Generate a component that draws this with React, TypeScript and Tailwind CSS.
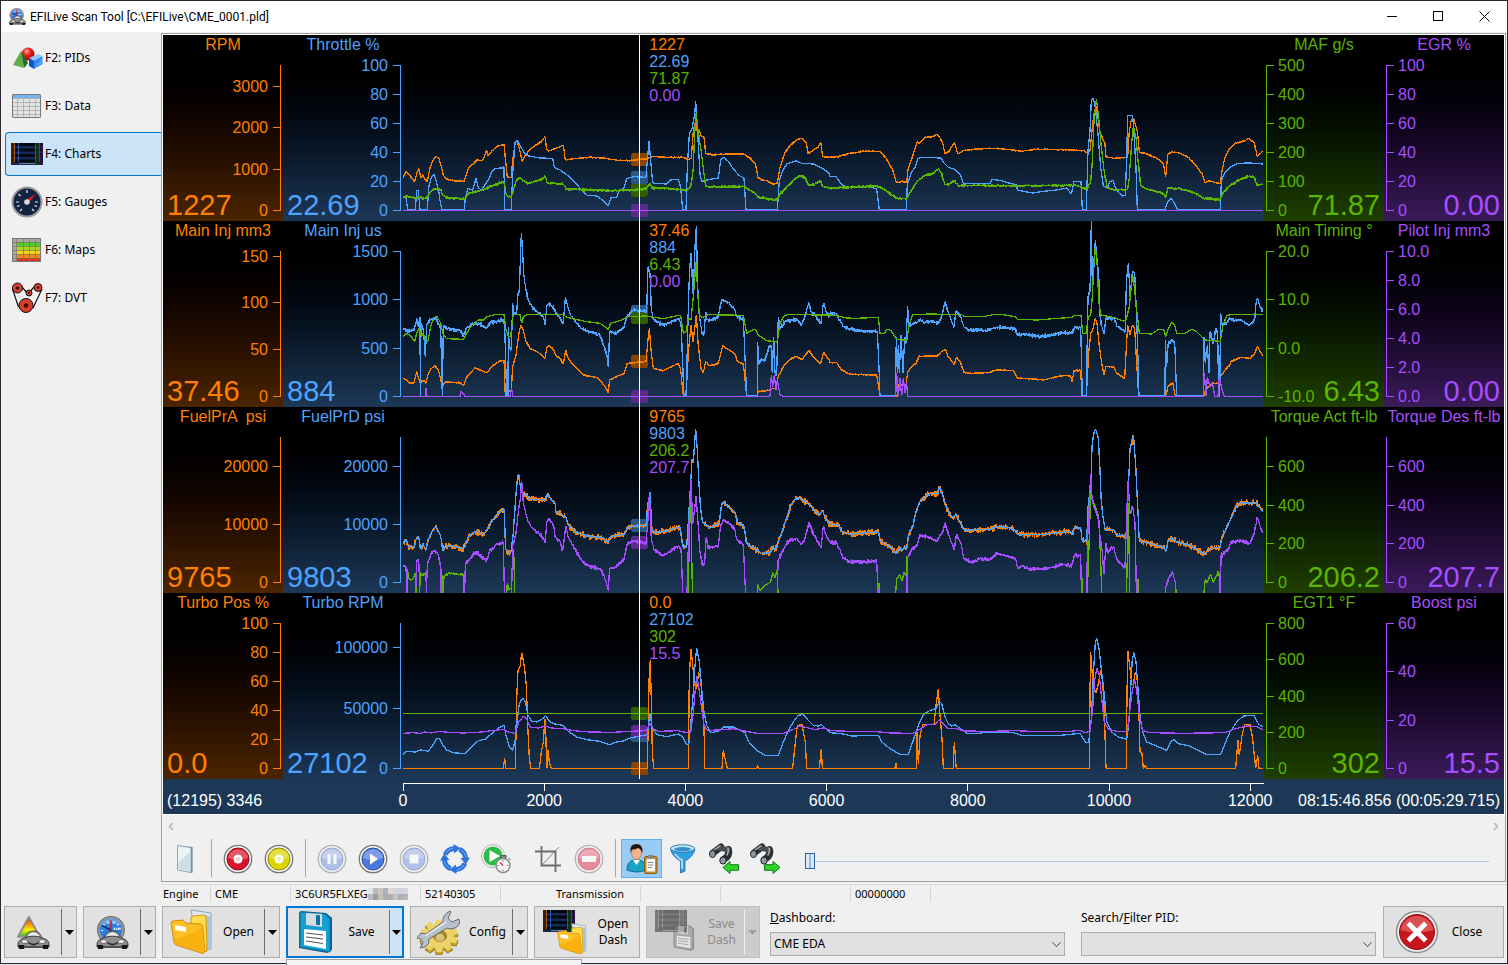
import type { ReactNode } from 'react'

const SAMPLES = 12195
const CURSOR = 3346

// Plot space: three units per pixel, 861 x 186 px
const PLOT_W = 2583
const PLOT_H = 558

const COLOR = {
  orange: '#ff8000',
  blue: '#4da3ff',
  green: '#5ab400',
  purple: '#a64dff',
}

const DIM = {
  orange: '#874400',
  blue: '#2b5785',
  green: '#2f5f00',
  purple: '#5a2a8c',
}

type Hue = keyof typeof COLOR

type Channel = {
  hue: Hue
  name: string
  value: string
  min: number
  max: number
  ticks: string[]
  marker: number
  jitter: number
  early: string
  late: string
}

const FUEL_EARLY =
  '9,412 18,400 24,420 42,425 48,400 56,392 62,430 68,412 78,432 82,410 95,380 106,362 118,380 124,400 128,435 135,422 150,418 190,428 200,408 205,392 228,375 248,386 262,370 278,342 295,322 312,308 317,430 325,440 334,436 340,380 346,290 351,230 356,205 361,240 368,265 378,265 390,280 430,280 436,285 442,262 452,280 465,290 468,320 482,325 497,332 504,356 530,378 560,390 608,395 625,410 632,392 672,385 682,366 700,360 738,358 743,300 750,258 755,370 765,380 800,375 840,362 848,420 860,425 866,330 872,230 876,160 880,170 887,68 892,130 896,220 902,310 908,350 930,365 958,352 964,300 970,288 985,302 1005,320 1012,350 1032,360 1040,412 1070,432 1085,442 1110,440 1118,425 1126,432 1140,395 1155,350 1172,300 1185,280 1197,276 1225,292 1245,318 1258,325 1268,315 1275,332 1288,355'
const FUEL_LATE =
  '0,355 25,357 36,378 60,384 145,378 150,405 180,422 198,442 210,425 215,435 225,422 230,430 235,390 250,355 258,318 270,285 300,262 325,262 327,242 335,258 345,290 358,325 368,335 378,325 390,350 402,372 480,370 500,362 535,364 555,372 565,386 640,385 720,376 726,385 733,366 752,366 757,405 770,405 775,290 783,240 786,120 790,90 796,70 804,90 808,150 814,290 820,340 826,372 850,370 860,388 888,390 893,290 900,130 910,88 916,160 922,280 928,405 960,412 1003,425 1007,438 1014,405 1025,395 1040,408 1080,418 1123,445 1145,425 1170,425 1175,395 1195,355 1220,300 1232,290 1262,292 1278,290 1285,300 1298,316'

const PANELS: Channel[][] = [
  [
    {
      hue: 'orange', name: 'RPM', value: '1227', min: 0, max: 3500, ticks: ['3000', '2000', '1000', '0'], marker: 376, jitter: 2,
      early: '9,430 18,412 30,425 44,444 50,418 57,404 62,432 68,422 76,438 82,442 90,402 98,380 108,367 116,372 124,398 130,424 138,435 160,440 193,442 200,418 208,398 222,388 230,378 248,380 256,360 260,348 263,366 275,352 290,337 303,334 312,330 316,372 322,430 334,430 338,380 345,330 350,318 356,336 361,355 366,382 372,370 385,352 405,335 425,322 435,308 440,345 446,352 470,342 490,334 496,378 520,374 570,370 610,372 660,380 690,380 740,374 760,367 810,370 850,370 866,377 874,372 880,290 886,266 890,290 898,290 904,306 912,310 917,358 930,362 1030,360 1050,372 1066,390 1074,430 1085,438 1100,440 1118,450 1132,447 1140,400 1155,355 1170,335 1190,318 1203,312 1218,325 1225,360 1240,348 1255,338 1262,324 1268,368 1288,370',
      late: '0,370 25,368 60,358 100,352 150,352 168,372 188,408 200,446 215,442 230,446 234,406 250,360 262,322 266,330 284,310 310,308 321,300 330,312 337,325 345,360 358,350 373,326 383,360 400,350 440,345 500,343 540,347 575,352 620,346 720,348 760,350 770,356 780,350 787,280 792,240 798,215 802,240 810,295 818,316 824,322 828,368 850,373 893,370 897,300 903,262 910,252 916,270 922,292 928,354 950,360 980,372 1000,388 1007,430 1013,362 1025,354 1050,358 1075,370 1100,396 1117,420 1124,446 1140,440 1155,446 1171,448 1176,410 1185,370 1196,348 1215,328 1240,322 1256,314 1272,325 1277,345 1282,368 1298,352',
    },
    {
      hue: 'blue', name: 'Throttle %', value: '22.69', min: 0, max: 100, ticks: ['100', '80', '60', '40', '20', '0'], marker: 430, jitter: 0,
      early: '9,490 18,492 23,528 46,528 50,470 55,470 58,505 60,528 82,528 86,460 94,430 102,422 108,440 116,470 120,500 126,528 193,528 196,490 204,464 218,468 228,434 235,462 245,468 256,450 265,438 275,415 285,403 310,402 312,398 314,528 318,528 334,528 338,420 345,325 352,320 360,335 372,355 386,366 420,372 458,373 463,400 480,408 500,422 520,440 545,468 562,484 590,486 610,500 625,515 632,492 650,490 656,472 672,462 680,434 700,428 738,430 742,380 747,322 752,380 758,446 765,448 800,450 812,438 835,436 842,460 848,528 858,528 862,400 868,300 876,285 884,240 887,202 892,280 900,420 905,442 930,436 955,432 962,378 970,370 985,382 1000,405 1018,425 1032,432 1038,528 1132,528 1138,440 1148,410 1160,390 1188,380 1205,388 1240,390 1262,400 1280,412 1288,420',
      late: '0,427 18,428 28,442 38,455 60,460 120,458 140,465 148,528 229,528 232,450 244,415 255,400 264,373 275,370 333,372 340,385 355,400 378,408 392,424 401,450 440,448 480,448 486,436 515,440 540,448 560,452 562,468 590,474 610,477 640,472 680,468 710,462 724,480 732,443 753,443 757,528 769,528 774,350 780,290 784,200 790,193 796,220 804,300 812,400 820,455 833,463 838,445 848,438 856,460 866,476 878,486 886,484 890,370 893,245 908,244 912,300 918,400 922,528 1005,528 1012,505 1024,492 1034,510 1044,528 1171,528 1174,440 1185,415 1200,400 1222,388 1260,387 1298,390',
    },
    {
      hue: 'green', name: 'MAF g/s', value: '71.87', min: 0, max: 500, ticks: ['500', '400', '300', '200', '100', '0'], marker: 468, jitter: 4,
      early: '9,490 20,486 44,492 60,490 72,495 82,488 95,470 108,464 122,466 130,486 150,493 195,494 206,478 230,472 250,468 265,460 285,452 310,444 314,455 320,485 334,490 340,470 350,436 358,432 370,440 385,448 400,444 420,438 436,428 442,448 490,450 498,465 540,467 640,470 700,468 740,464 750,448 757,462 800,464 860,468 872,460 880,400 884,300 888,238 893,280 902,340 912,420 917,458 960,458 1030,458 1060,474 1075,490 1110,496 1132,496 1140,480 1160,460 1180,438 1200,424 1215,430 1225,454 1245,450 1262,440 1268,458 1288,462',
      late: '0,462 60,460 140,456 165,468 200,493 230,494 240,475 262,442 285,424 310,418 325,404 333,415 345,452 360,450 373,440 385,456 440,454 560,456 740,454 770,464 782,445 787,380 792,260 799,196 805,240 814,340 822,410 832,462 860,468 893,466 898,430 904,340 910,275 918,310 924,380 932,455 950,465 1000,478 1007,492 1013,462 1050,464 1090,475 1125,494 1170,496 1180,475 1200,455 1230,436 1256,427 1272,430 1282,455 1298,450',
    },
    {
      hue: 'purple', name: 'EGR %', value: '0.00', min: 0, max: 100, ticks: ['100', '80', '60', '40', '20', '0'], marker: 529, jitter: 0,
      early: '9,529', late: '1298,529',
    },
  ],
  [
    {
      hue: 'orange', name: 'Main Inj mm3', value: '37.46', min: 0, max: 155, ticks: ['150', '100', '50', '0'], marker: 424, jitter: 2,
      early: '9,475 20,480 30,490 42,488 50,455 60,488 72,480 78,490 85,460 95,445 105,437 115,450 127,500 135,486 178,488 192,495 198,475 212,458 225,443 240,450 260,458 275,440 295,425 312,420 316,528 320,528 325,512 334,512 338,440 348,405 356,345 362,315 368,325 378,365 390,385 420,400 435,415 440,385 446,377 460,388 467,405 480,415 490,432 497,390 503,412 520,435 550,465 590,472 612,495 625,518 629,480 650,470 672,460 682,430 738,425 742,380 748,325 754,400 760,445 790,452 835,430 842,450 850,528 858,528 865,400 873,315 879,365 889,285 895,380 904,450 910,458 917,425 930,438 955,430 968,378 985,388 1005,402 1012,425 1030,432 1040,528 1072,528 1074,515 1100,512 1125,505 1135,470 1150,440 1170,418 1188,410 1207,418 1227,392 1238,408 1262,432 1270,398 1288,420',
      late: '0,427 20,428 35,450 60,463 140,465 146,500 150,528 203,528 205,495 228,495 233,455 244,440 258,430 267,410 290,408 322,408 335,395 346,388 355,410 373,435 379,412 390,425 403,458 430,460 475,458 500,450 550,452 562,474 600,476 640,480 700,466 722,468 726,485 732,452 752,452 756,528 769,528 776,400 782,340 788,330 796,295 801,310 808,380 815,430 822,465 828,440 850,440 860,460 884,475 888,400 893,315 900,345 907,315 914,325 920,430 926,528 1007,528 1014,500 1028,488 1036,528 1123,528 1126,510 1145,490 1165,490 1172,470 1185,450 1200,435 1203,425 1230,412 1260,415 1274,400 1282,380 1298,408',
    },
    {
      hue: 'blue', name: 'Main Inj us', value: '884', min: 0, max: 1500, ticks: ['1500', '1000', '500', '0'], marker: 274, jitter: 6,
      early: '9,325 30,335 44,325 50,295 55,320 60,290 61,528 63,310 70,330 76,410 80,315 90,300 105,295 115,310 122,325 127,528 130,320 150,328 180,330 190,345 200,325 215,310 240,312 260,325 270,308 310,300 314,320 320,528 324,528 325,320 328,385 334,385 338,250 342,280 350,280 354,220 358,210 362,100 364,40 368,100 371,160 378,210 386,245 400,265 430,290 435,315 440,260 446,250 462,265 475,290 490,310 496,232 503,262 515,290 530,310 545,325 560,332 600,345 612,380 620,400 625,440 629,335 650,340 672,320 680,290 700,270 740,275 744,140 750,160 754,270 760,300 790,315 815,305 835,295 843,310 852,528 858,528 864,300 868,165 873,100 880,230 884,100 889,18 893,200 898,290 907,345 912,340 917,275 922,300 940,300 955,290 965,238 985,248 1003,265 1010,290 1030,300 1040,528 1072,528 1073,365 1076,435 1082,420 1095,420 1108,380 1113,375 1117,460 1121,350 1125,460 1130,460 1135,290 1140,325 1155,305 1190,298 1205,315 1220,270 1227,248 1233,275 1245,285 1263,312 1270,250 1280,280 1288,288',
      late: '0,282 18,280 28,300 40,320 60,328 110,334 142,334 146,420 150,528 196,528 199,350 202,460 205,375 208,460 213,345 219,460 224,350 228,370 233,258 236,315 260,310 266,298 285,308 300,303 325,310 335,290 345,245 352,270 372,322 378,272 392,290 403,322 420,330 470,332 500,322 555,325 562,345 580,342 635,350 700,338 725,340 735,322 752,322 757,528 769,528 774,230 780,215 784,0 787,200 793,120 796,60 800,110 806,160 810,290 815,320 822,340 828,295 850,295 862,320 886,335 889,190 895,130 900,230 907,155 914,160 918,250 922,350 927,528 1005,528 1006,360 1010,440 1014,375 1025,360 1034,365 1040,528 1120,528 1122,350 1126,430 1132,375 1137,460 1140,335 1150,370 1158,325 1163,340 1166,528 1169,528 1172,280 1176,315 1190,310 1200,295 1215,302 1232,300 1258,315 1274,300 1278,250 1282,235 1290,260 1298,275',
    },
    {
      hue: 'green', name: 'Main Timing °', value: '6.43', min: -10, max: 20, ticks: ['20.0', '10.0', '0.0', '-10.0'], marker: 292, jitter: 0,
      early: '9,350 20,340 32,348 44,364 50,340 58,325 64,350 70,340 78,365 84,362 92,320 102,292 112,290 122,310 130,345 140,356 190,358 200,340 215,315 235,300 250,300 262,290 285,284 312,284 318,330 326,350 332,350 337,300 340,284 360,284 365,310 370,290 380,284 490,284 500,292 560,305 600,310 625,328 632,310 660,302 685,290 740,288 750,290 790,296 835,286 842,288 850,340 858,335 865,295 873,300 880,230 888,125 894,230 898,285 907,292 925,284 1030,286 1040,340 1060,328 1068,330 1075,345 1100,362 1132,366 1140,310 1150,290 1160,284 1288,285',
      late: '0,285 25,288 50,294 80,295 145,292 150,340 162,340 172,328 183,332 200,358 220,360 231,360 236,320 248,284 300,282 395,284 402,290 460,290 490,284 520,284 555,290 562,298 620,300 685,295 725,292 735,286 753,286 758,340 768,340 775,290 782,285 787,230 792,120 796,80 802,140 806,240 812,285 850,292 880,303 888,300 898,260 904,200 908,165 914,210 920,270 928,340 965,342 985,328 1002,330 1007,350 1015,325 1025,308 1034,315 1040,340 1065,340 1085,328 1100,335 1115,350 1125,360 1171,364 1178,320 1190,286 1210,283 1298,284',
    },
    {
      hue: 'purple', name: 'Pilot Inj mm3', value: '0.00', min: 0, max: 10, ticks: ['10.0', '8.0', '6.0', '4.0', '2.0', '0.0'], marker: 529, jitter: 0,
      early: '9,529 76,529 78,505 81,529 180,529 182,515 190,520 194,529 330,529 335,505 338,529 1110,529 1114,465 1118,500 1123,465 1128,510 1132,480 1140,525 1150,529 1288,529',
      late: '0,529 197,529 200,460 205,529 210,475 215,529 220,475 225,520 230,490 233,529 1120,529 1123,458 1128,529 1132,470 1140,500 1148,490 1154,529 1164,529 1168,470 1175,505 1183,529 1298,529',
    },
  ],
  [
    {
      hue: 'orange', name: 'FuelPrA  psi', value: '9765', min: 0, max: 25000, ticks: ['20000', '10000', '0'], marker: 358, jitter: 9,
      early: FUEL_EARLY, late: FUEL_LATE,
    },
    {
      hue: 'blue', name: 'FuelPrD psi', value: '9803', min: 0, max: 25000, ticks: ['20000', '10000', '0'], marker: 358, jitter: 1,
      early: FUEL_EARLY, late: FUEL_LATE,
    },
    {
      hue: 'green', name: 'Torque Act ft-lb', value: '206.2', min: 0, max: 750, ticks: ['600', '400', '200', '0'], marker: 409, jitter: 3,
      early: '9,600 20,600 22,490 28,522 40,518 46,500 50,600 59,600 60,500 66,510 78,500 80,600 123,600 125,490 128,575 132,510 145,502 190,506 194,600 318,600 322,530 326,552 334,545 338,480 341,430 345,600 864,600 868,400 872,270 878,600 1071,600 1073,535 1080,555 1095,538 1112,528 1118,500 1126,515 1132,490 1135,600 1288,600',
      late: '0,600 145,600 147,530 150,600 195,600 198,545 200,520 208,505 216,525 222,500 228,510 231,450 234,600 755,600 757,515 759,600 770,600 776,450 782,260 806,330 812,460 816,600 889,600 895,290 900,600 922,600 924,520 927,600 1035,600 1038,550 1041,600 1119,600 1123,545 1126,520 1132,530 1142,505 1150,530 1158,512 1166,495 1169,525 1172,600 1298,600',
    },
    {
      hue: 'purple', name: 'Torque Des ft-lb', value: '207.7', min: 0, max: 750, ticks: ['600', '400', '200', '0'], marker: 409, jitter: 6,
      early: '9,480 18,482 22,600 46,600 50,465 56,460 61,600 78,600 82,475 94,440 104,433 114,445 122,480 124,600 193,600 196,475 210,458 228,436 240,450 260,465 268,436 290,415 310,408 314,600 334,600 338,420 348,380 356,310 362,270 365,225 370,290 380,335 395,365 420,385 432,400 436,410 440,350 445,338 460,355 466,395 480,405 488,435 497,360 505,395 525,430 550,470 570,482 600,488 610,505 620,535 625,555 629,488 645,485 672,460 682,412 700,405 738,412 744,340 748,262 754,400 762,430 785,448 805,440 835,420 843,430 850,600 860,600 866,380 873,222 878,355 888,270 894,350 900,440 908,480 914,470 918,395 925,425 955,420 962,360 970,340 990,355 1003,365 1010,400 1030,415 1038,600 1132,600 1134,465 1145,440 1165,405 1190,398 1205,415 1215,395 1227,350 1240,385 1263,425 1270,362 1280,395 1288,405',
      late: '0,408 20,410 28,428 38,455 60,468 140,466 146,600 229,600 233,455 246,430 262,418 268,390 290,392 322,405 328,390 338,380 345,350 355,385 373,432 380,385 392,410 403,460 430,470 450,458 480,462 500,442 530,450 556,458 563,488 575,478 600,490 650,488 700,475 725,480 733,448 752,448 755,600 768,600 774,370 782,205 787,290 795,310 803,325 810,390 816,430 822,505 828,410 832,440 850,422 860,460 885,485 890,330 894,225 900,325 907,300 915,350 920,600 1005,600 1007,545 1018,510 1028,500 1036,530 1038,600 1171,600 1173,450 1185,438 1198,425 1202,408 1230,405 1260,412 1272,385 1282,335 1290,360 1298,382',
    },
  ],
  [
    {
      hue: 'orange', name: 'Turbo Pos %', value: '0.0', min: 0, max: 100, ticks: ['100', '80', '60', '40', '20', '0'], marker: 529, jitter: 0,
      early: '9,529 310,529 314,498 317,529 346,529 350,320 354,235 360,225 365,182 370,205 375,240 379,280 383,400 388,500 393,529 418,529 424,480 430,450 434,390 436,380 439,480 441,529 444,475 448,510 454,529 742,529 745,380 748,235 751,205 754,330 757,480 761,529 865,529 868,250 873,170 878,220 884,280 890,290 896,240 902,260 908,350 912,400 914,529 966,529 970,475 975,500 982,529 1070,529 1073,520 1076,529 1178,529 1186,450 1192,400 1206,398 1212,430 1216,450 1220,529 1258,529 1264,470 1267,529 1288,529',
      late: '0,529 195,529 197,512 201,529 259,529 261,420 265,515 270,430 278,398 312,398 318,340 325,292 330,370 336,440 340,529 370,529 373,450 377,510 379,529 778,529 780,300 782,180 787,250 792,290 798,302 804,280 812,235 818,270 823,360 828,529 889,529 891,300 894,178 900,230 905,275 910,280 915,245 920,240 926,330 930,480 936,485 940,529 946,520 950,529 1217,529 1224,445 1228,490 1236,430 1244,398 1260,398 1268,440 1272,480 1277,529 1283,490 1287,529 1298,529',
    },
    {
      hue: 'blue', name: 'Turbo RPM', value: '27102', min: 0, max: 120000, ticks: ['100000', '50000', '0'], marker: 430, jitter: 0,
      early: '9,488 20,478 45,480 62,474 85,478 98,460 110,440 118,440 128,458 140,474 160,482 195,485 215,465 235,446 255,442 275,425 295,408 312,400 318,430 328,465 337,475 345,450 352,380 358,335 368,318 376,330 384,370 395,388 410,390 428,380 437,370 445,385 460,395 490,400 505,418 530,435 560,443 600,448 628,458 650,450 670,447 690,438 720,432 742,428 750,362 756,405 770,428 800,434 835,426 848,435 858,455 866,458 872,400 880,300 884,230 890,168 898,210 905,290 912,360 920,400 932,422 955,418 970,405 1000,405 1035,422 1045,448 1070,475 1095,490 1135,490 1148,455 1165,415 1180,390 1195,370 1210,367 1225,385 1240,400 1255,402 1265,398 1275,408 1288,418',
      late: '0,422 35,425 65,432 145,430 155,450 180,470 210,487 235,487 248,450 265,400 280,368 300,355 318,350 328,328 335,335 345,375 355,395 365,402 375,398 390,410 412,424 445,424 475,420 550,422 575,430 690,430 750,424 760,440 768,452 776,450 784,380 790,250 796,150 801,140 807,170 815,240 823,310 830,390 845,420 865,435 890,442 896,400 902,290 907,200 912,182 918,210 924,290 930,370 938,420 950,450 975,460 1010,475 1022,450 1032,442 1045,455 1080,462 1110,478 1130,487 1172,487 1185,455 1200,420 1220,390 1240,372 1272,370 1285,395 1298,405',
    },
    {
      hue: 'green', name: 'EGT1 °F', value: '302', min: 0, max: 800, ticks: ['800', '600', '400', '200', '0'], marker: 364, jitter: 0,
      early: '9,364', late: '1298,364',
    },
    {
      hue: 'purple', name: 'Boost psi', value: '15.5', min: 0, max: 60, ticks: ['60', '40', '20', '0'], marker: 419, jitter: 0,
      early: '9,424 40,422 60,424 75,420 95,423 120,418 145,421 190,423 245,420 275,416 310,412 325,420 345,424 356,390 370,373 380,380 390,405 415,408 437,402 455,408 490,410 520,416 570,420 640,421 690,418 740,416 750,395 756,408 775,418 835,416 850,420 872,422 880,360 886,290 890,252 897,290 905,350 912,400 922,415 960,414 1000,410 1040,418 1070,424 1150,424 1180,412 1200,402 1225,408 1245,413 1270,408 1288,414',
      late: '0,416 60,418 140,419 180,423 250,424 280,405 290,398 315,397 328,383 340,395 355,410 380,410 400,417 480,418 560,416 600,418 720,418 750,415 765,422 780,418 788,350 794,265 801,228 808,250 815,320 823,390 835,412 860,418 892,418 900,350 907,295 914,265 920,295 928,370 938,415 960,422 1060,424 1185,422 1210,412 1250,402 1280,404 1298,412',
    },
  ],
]

// The log is stored in two blocks, each with its own origin
function parse(block: string, dx: number) {
  return block.split(' ').map((pair) => {
    const [x, y] = pair.split(',').map(Number)
    return [x + dx, y - 3]
  })
}

// Noisy channels sweep a short vertical band at every pixel column
function tracePoints(ch: Channel) {
  const pts = [...parse(ch.early, -9), ...parse(ch.late, 1281)]
  let seed = 17 + ch.jitter * 31
  const noise = () => {
    seed = (seed * 1103515245 + 12345) % 2147483648
    const r = seed / 2147483648
    return (0.25 + r * r) * ch.jitter
  }
  const out: string[] = []
  pts.forEach(([x, y], i) => {
    out.push(`${x},${y}`)
    const next = pts[i + 1]
    if (!next || ch.jitter === 0 || (y > 520 && next[1] > 520)) return
    for (let px = x + 3; px < next[0]; px += 3) {
      const t = (px - x) / (next[0] - x)
      const mid = y + (next[1] - y) * t
      out.push(`${px},${(mid - noise()).toFixed(1)}`, `${px},${(mid + noise()).toFixed(1)}`)
    }
  })
  return out.join(' ')
}

function Scale({ ch, side }: { ch: Channel; side: 'left' | 'right' }) {
  const left = side === 'left'
  const axis = left ? 117.5 : 2.5
  const tickEnd = left ? 110 : 10
  const color = COLOR[ch.hue]
  const yOf = (v: number) => Math.floor(175.5 - (145 * (v - ch.min)) / (ch.max - ch.min)) + 0.5
  return (
    <svg width="120" height="186" className="block" fill={color} fontSize="16">
      <text x="60" y="15" textAnchor="middle" className="whitespace-pre">{ch.name}</text>
      <path
        d={`M${axis} 30V176` + ch.ticks.map((t) => `M${axis} ${yOf(Number(t))}H${tickEnd}`).join('')}
        stroke={color}
        shapeRendering="crispEdges"
      />
      {ch.ticks.map((t) => (
        <text key={t} x={left ? 105 : 14} y={yOf(Number(t)) + 5.5} textAnchor={left ? 'end' : 'start'}>{t}</text>
      ))}
      <text x={left ? 4 : 116} y="180" fontSize="29" textAnchor={left ? 'start' : 'end'}>{ch.value}</text>
    </svg>
  )
}

function Panel({ channels }: { channels: Channel[] }) {
  const [orange, blue, green, purple] = channels
  return (
    <section className="grid grid-cols-[120px_minmax(0,1fr)_120px_120px]">
      <div className="bg-linear-to-b from-black from-5% to-[#4c2500]">
        <Scale ch={orange} side="left" />
      </div>
      <div className="grid grid-cols-[120px_minmax(0,1fr)] bg-linear-to-b from-black from-5% to-[#1d3857]">
        <Scale ch={blue} side="left" />
        <div className="relative">
          <svg
            viewBox={`0 0 ${PLOT_W} ${PLOT_H}`}
            preserveAspectRatio="none"
            className="block h-[186px] w-full"
            shapeRendering="crispEdges"
          >
            {channels.map((ch) => (
              <rect key={ch.name} x={(PLOT_W * CURSOR) / SAMPLES - 25} y={ch.marker - 22} width="51" height="39" rx="7" fill={DIM[ch.hue]} />
            ))}
            {channels.map((ch) => (
              <polyline
                key={ch.name}
                points={tracePoints(ch)}
                fill="none"
                stroke={COLOR[ch.hue]}
                strokeWidth="1.3"
                strokeLinejoin="bevel"
                vectorEffect="non-scaling-stroke"
              />
            ))}
          </svg>
          {/* Cursor and its readout */}
          <div
            className="absolute inset-y-0 border-l border-white pt-px pl-[9px] text-base leading-[17px]"
            style={{ left: `${(CURSOR / SAMPLES) * 100}%` }}
          >
            <p className="text-[#ff8000]">{orange.value}</p>
            <p className="text-[#4da3ff]">{blue.value}</p>
            <p className="text-[#5ab400]">{green.value}</p>
            <p className="text-[#a64dff]">{purple.value}</p>
          </div>
        </div>
      </div>
      <div className="bg-linear-to-b from-black from-5% to-[#1f3f00]">
        <Scale ch={green} side="right" />
      </div>
      <div className="bg-linear-to-b from-black from-5% to-[#3b1b5a]">
        <Scale ch={purple} side="right" />
      </div>
    </section>
  )
}

function TimeAxis() {
  const marks = [0, 2000, 4000, 6000, 8000, 10000, 12000]
  return (
    <div className="grid h-[35px] grid-cols-[240px_minmax(0,1fr)_240px] bg-[#1d3857] text-base text-white">
      <p className="pt-2.5 pl-1 leading-6">(12195) 3346</p>
      <svg width="100%" height="35" className="overflow-visible" fontSize="16" fill="#fff">
        <line x1="0" x2="100%" y1="4.5" y2="4.5" stroke="#fff" shapeRendering="crispEdges" />
        {marks.map((m) => {
          const x = `${(m / SAMPLES) * 100}%`
          return (
            <g key={m}>
              <line x1={x} x2={x} y1="4" y2="12" stroke="#fff" shapeRendering="crispEdges" />
              <text x={x} y="27" textAnchor="middle">{m}</text>
            </g>
          )
        })}
      </svg>
      <p className="pt-2.5 pr-1 text-right leading-6 whitespace-nowrap">08:15:46.856 (00:05:29.715)</p>
    </div>
  )
}

/* ---------- Icons ---------- */

function Car() {
  return (
    <g>
      <path d="M8 22q1-7 8-7.500 7 .5 8 7.500z" fill="#a6a6a6" stroke="#333" strokeWidth=".8" />
      <path d="M10.500 19.500q2-3.500 5.500-3.500t5.500 3.500z" fill="#ececec" />
      <path d="M1 27q0-4 7-6 8-3 16 0 7 2 7 6v3H1z" fill="#8e8e8e" stroke="#2a2a2a" strokeWidth=".8" />
      <path d="M4 23.500l5-.5 2 3-5 .5zM28 23.500l-5-.5-2 3 5 .5z" fill="#fff" stroke="#333" strokeWidth=".5" />
      <path d="M11 25q5 4 10 0v1.500q-5 4-10 0z" fill="#222" />
      <path d="M1 28h6v4H2zM25 28h6l-1 4h-5z" fill="#161616" />
      <path d="M7 29.500h18V31H7z" fill="#4a4a4a" />
    </g>
  )
}

function ScanIcon({ size }: { size: number }) {
  return (
    <svg width={size} height={size} viewBox="0 0 32 32">
      <circle cx="14.500" cy="13.500" r="13" fill="#9b9b9b" stroke="#6b6b6b" />
      <circle cx="14.500" cy="13.500" r="10.800" fill="#2f7de0" />
      <path d="M5 9a10.500 10.500 0 0 1 19 0q-9-3-19 0z" fill="#7fb6f5" opacity=".7" />
      <path d="M5 14h2M7 8l1.500 1M11 5l1 2M18 5l-1 2M22 8l-1.500 1M24 12h-2" stroke="#fff" />
      <path d="M14.500 14V4" stroke="#e01010" strokeWidth="1.400" />
      <path d="M14.500 14L6 9" stroke="#082a60" strokeWidth="1.400" />
      <path d="M17 12.500h7" stroke="#dce9fb" strokeWidth="2" strokeDasharray="1.500 .7" />
      <Car />
    </svg>
  )
}

function TuneIcon() {
  return (
    <svg width="33" height="33" viewBox="0 0 32 32">
      <defs>
        <linearGradient id="heat" x1="0" x2="0" y1="0" y2="1">
          <stop offset="0" stopColor="#e01010" />
          <stop offset=".35" stopColor="#ff8a00" />
          <stop offset=".65" stopColor="#f6f000" />
          <stop offset="1" stopColor="#2fc020" />
        </linearGradient>
      </defs>
      <path d="M11.500 1L22 20H1z" fill="url(#heat)" stroke="#8c8c8c" strokeWidth="2" strokeLinejoin="round" />
      <Car />
    </svg>
  )
}

function PidsIcon() {
  return (
    <svg width="32" height="24" viewBox="0 0 32 24">
      <defs>
        <radialGradient id="ball" cx=".4" cy=".3" r=".7">
          <stop offset="0" stopColor="#ffb0a0" />
          <stop offset=".4" stopColor="#ee2222" />
          <stop offset="1" stopColor="#a30000" />
        </radialGradient>
      </defs>
      <circle cx="17" cy="8" r="6.500" fill="url(#ball)" />
      <path d="M10 5L2 19l11 3z" fill="#5fae4a" />
      <path d="M10 5l3 17 4-5z" fill="#1b6e26" />
      <path d="M18 12l5 2.500V23l-5-3z" fill="#1557c4" />
      <path d="M23 14.500l8.500-4.500v8L23 23z" fill="#2f8bf2" />
      <path d="M18 12l9-4 4.500 2-8.500 4.500z" fill="#8cc4ff" />
      <path d="M24 21.500l7-9v4.500z" fill="#67b3ff" opacity=".7" />
    </svg>
  )
}

function DataIcon() {
  return (
    <svg width="32" height="25" viewBox="-1 0 32 25">
      <rect x=".5" y=".5" width="28" height="23" rx="1" fill="#e4e4e4" stroke="#777" />
      <rect x="1" y="1" width="27" height="3" fill="#6fb2ee" />
      <path d="M1 4.500h27M1 8.500h27M1 12.500h27M1 16.500h27M1 20.500h27M5.500 1v22M11.500 1v22M17.500 1v22M23.500 1v22" stroke="#b4b4b4" />
      <rect x=".5" y=".5" width="28" height="23" rx="1" fill="none" stroke="#777" />
    </svg>
  )
}

function MiniChart({ gray }: { gray?: boolean }) {
  const rows = [0, 5.5, 11, 16.5]
  return (
    <g filter={gray ? 'grayscale(1)' : undefined} opacity={gray ? 0.5 : 1}>
      <rect width="32" height="22" fill="#14295a" />
      {rows.map((y) => (
        <rect key={y} y={y} width="32" height="3" fill="#04060e" />
      ))}
      <rect width="3" height="22" fill="#3c2412" opacity=".8" />
      <rect x="24.500" width="3.500" height="22" fill="#0e3a12" opacity=".8" />
      <rect x="28.500" width="3.500" height="22" fill="#321048" opacity=".8" />
      <path d="M3.500 0v19" stroke="#d06a10" strokeWidth=".8" />
      <path d="M7.500 0v19" stroke="#3570d0" strokeWidth=".8" />
      <path d="M24.500 0v19" stroke="#1d8a1d" strokeWidth=".8" />
      <path d="M28.500 0v19" stroke="#9a20c8" strokeWidth=".8" />
      <path d="M8 20.500h16" stroke="#9fb4d8" strokeWidth=".6" />
    </g>
  )
}

function ChartsIcon() {
  return (
    <svg width="32" height="22" viewBox="0 0 32 22">
      <MiniChart />
    </svg>
  )
}

function GaugeIcon() {
  return (
    <svg width="32" height="32" viewBox="0 0 32 32">
      <circle cx="16" cy="16" r="14.500" fill="#12233f" stroke="#9a9a9a" strokeWidth="2" />
      <path
        d="M5 16h3M24 16h3M16 4v3M7.500 8l2 2M6 20.500l2.500-1M26 20.500l-2.500-1M9 25l2-2M23 25l-2-2"
        stroke="#e8eef8"
        strokeWidth="1.200"
      />
      <path d="M15 14.500L25.500 7 17.500 17z" fill="#f01818" />
      <circle cx="16" cy="16" r="2.800" fill="#d8d8d8" />
    </svg>
  )
}

function MapsIcon() {
  return (
    <svg width="32" height="25" viewBox="-1 0 32 25">
      <rect x=".5" y=".5" width="28" height="23" fill="#a8a8a8" stroke="#777" />
      <rect x="5" y="4" width="23" height="4" fill="#4bd02a" />
      <rect x="5" y="8" width="23" height="4" fill="#a9d822" />
      <rect x="5" y="12" width="23" height="4" fill="#f2d61e" />
      <rect x="5" y="16" width="23" height="4" fill="#ee8722" />
      <rect x="5" y="20" width="23" height="3" fill="#dd2f22" />
      <path d="M1 4.500h27M1 8.500h27M1 12.500h27M1 16.500h27M1 20.500h27M4.500 1v22M11.500 1v22M17.500 1v22M23.500 1v22" stroke="#7d7550" strokeWidth=".7" />
    </svg>
  )
}

function DvtIcon() {
  return (
    <svg width="32" height="32" viewBox="0 0 32 32">
      <path d="M1.500 7l6 18M10 4l7 8 6-7M31 7l-9 19" stroke="#111" strokeWidth="1.200" fill="none" />
      <g fill="#d5402c" stroke="#111">
        <circle cx="6.500" cy="6" r="5" />
        <circle cx="27" cy="5.500" r="4" />
        <circle cx="18" cy="11" r="3" />
        <circle cx="15" cy="23.500" r="7" />
      </g>
      <g fill="#5d100a" stroke="#2b0805">
        <circle cx="6.500" cy="6" r="1.200" />
        <circle cx="27" cy="5.500" r=".8" />
        <circle cx="18" cy="11" r=".6" />
        <circle cx="15" cy="23.500" r="1.800" />
      </g>
    </svg>
  )
}

function RoundIcon({ color, shade, faded, children }: { color: string; shade: string; faded?: boolean; children: ReactNode }) {
  return (
    <svg width="30" height="30" viewBox="0 0 30 30" opacity={faded ? 0.5 : 1}>
      <circle cx="15" cy="15" r="13.700" fill="#f6f6f6" stroke="#777" strokeWidth="1.300" />
      <circle cx="15" cy="15" r="11" fill={color} stroke={shade} />
      <path d="M4.800 14a10.300 10.300 0 0 1 20.400 0q-10 3-20.400 0z" fill="#fff" opacity=".28" />
      {children}
    </svg>
  )
}

function DoorIcon() {
  return (
    <svg width="20" height="30" viewBox="0 0 20 30">
      <path d="M2.500 1.500L17.500 3v25.500l-2 .5z" fill="#5d7f93" />
      <path d="M2.500 1.500L16 3.500v25L2.500 26z" fill="#eaf2f6" stroke="#8fa7b3" />
      <path d="M3.500 18L15 8v19L3.500 25z" fill="#ccdee8" />
    </svg>
  )
}

function RefreshIcon() {
  return (
    <svg width="30" height="30" viewBox="0 0 30 30">
      {[0, 90, 180, 270].map((a) => (
        <g key={a} transform={`rotate(${a} 15 15)`}>
          <path d="M5.200 10.500A10.700 10.700 0 0 1 14 4.400" fill="none" stroke="#2f74dc" strokeWidth="5" />
          <path d="M13.500 0L20.500 4.300 14 9.500z" fill="#2f74dc" />
          <path d="M6 9A10.700 10.700 0 0 1 13 4" fill="none" stroke="#7aaef2" />
        </g>
      ))}
    </svg>
  )
}

function TimedPlayIcon() {
  return (
    <svg width="32" height="32" viewBox="0 0 32 32">
      <circle cx="13" cy="13" r="11.500" fill="#f2f2f2" stroke="#b5b5b5" />
      <circle cx="13" cy="13" r="9.500" fill="#2bbd44" />
      <path d="M9.500 7v12L20 13z" fill="#fff" />
      <path d="M21 12.500h5v3h-5zM28.500 15l2 2" fill="#888" stroke="#555" />
      <circle cx="23" cy="22.500" r="7" fill="#f8f8f8" stroke="#8a8a8a" strokeWidth="1.500" />
      <path d="M23 22.500l-3-3" stroke="#d22" strokeWidth="1.300" />
      <path d="M23 17v1.500M23 26.500V28M17.500 22.500H19M27 22.500h1.500" stroke="#777" />
    </svg>
  )
}

function CropIcon() {
  return (
    <svg width="28" height="28" viewBox="0 0 28 28" fill="none" stroke="#6c6c6c" strokeWidth="1.800">
      <path d="M7.500 1v19.500H27M1 6.500h20.500V27" />
      <path d="M8 20L25 2" strokeWidth=".8" />
    </svg>
  )
}

function PersonIcon() {
  return (
    <svg width="34" height="34" viewBox="0 0 34 34">
      <path d="M2 28q0-9 7-10h5q7 1 7 10-9 4-19 0z" fill="#1ba3c6" stroke="#0b6c88" />
      <path d="M8 18l3.500 5L15 18z" fill="#fff" />
      <ellipse cx="11.500" cy="11" rx="5" ry="6.500" fill="#f0b488" stroke="#a86b3c" strokeWidth=".6" />
      <path d="M5.500 11Q4 2.500 11 2q7.500 0 6.500 9-2-4.500-4.500-5-4 2-6 1.500-.8 1-1.500 3.500z" fill="#241712" />
      <rect x="19.500" y="14.500" width="12.500" height="17" rx="1.500" fill="#c78b2a" stroke="#8a5b12" />
      <path d="M21.500 17H30v12.500h-8.500z" fill="#fafafa" />
      <path d="M23 13h5.500v3.500H23z" fill="#888" />
      <path d="M23 20.500h5.500M23 23h5.500M23 25.500h4" stroke="#8a8a8a" />
    </svg>
  )
}

function FunnelIcon() {
  return (
    <svg width="30" height="32" viewBox="0 0 30 32">
      <path d="M2.500 6q2 8 10 12v12l4.500-2V18q8-4 10-12z" fill="#2f9fe0" stroke="#1668a8" strokeWidth=".8" />
      <path d="M7 11q4 5 7 6v9" stroke="#a8dcff" strokeWidth="2" fill="none" />
      <ellipse cx="14.500" cy="5.500" rx="12" ry="3.800" fill="#bfe4fb" stroke="#1668a8" strokeWidth=".8" />
      <ellipse cx="14.500" cy="6.200" rx="8.500" ry="2.200" fill="#3a8fc8" />
    </svg>
  )
}

function BinocularsIcon({ dir }: { dir: 'back' | 'next' }) {
  return (
    <svg width="32" height="32" viewBox="0 0 32 32">
      <g fill="none" strokeLinecap="round">
        <path d="M5.500 9.500L13 4" stroke="#2b2f32" strokeWidth="7" />
        <path d="M15.500 16.500Q22 13 20.500 6.500" stroke="#2b2f32" strokeWidth="7" />
        <path d="M11 5l9 2" stroke="#484e52" strokeWidth="5" />
        <path d="M6 7l6-4M19 12q2-3 1-7" stroke="#a9b1b6" strokeWidth="1.500" />
      </g>
      <ellipse cx="4.500" cy="11" rx="3" ry="3.600" fill="#8d989f" stroke="#1c1f21" />
      <ellipse cx="15" cy="17.500" rx="3.200" ry="3.600" fill="#8d989f" stroke="#1c1f21" />
      {dir === 'back' ? (
        <path d="M15 24.500l7-6v3.200h8.500v5.600H22v3.200z" fill="#2bd52b" stroke="#107a10" />
      ) : (
        <path d="M31 24.500l-7-6v3.200h-8.500v5.600H24v3.200z" fill="#2bd52b" stroke="#107a10" />
      )}
    </svg>
  )
}

function Folder() {
  return (
    <g>
      <path d="M21 1l20 3v36l-12 2z" fill="#dcebf5" stroke="#8da3b5" />
      <path d="M35 6l6 2v30l-5 3z" fill="#a9c4d6" />
      <path d="M21 14V9q0-2 2-2l11-1q2 0 2 2l1 34-6 2z" fill="#ffdb4d" stroke="#d69a10" />
      <path d="M1 14q0-2 2-2l10-1 3 3 14 1q2 0 2.500 2L35 43q-2 2-4 1L6 36q-2-1-2-3z" fill="#fdbf26" stroke="#d1900c" />
      <path d="M4 30q14-2 28-12l2 24q-1 1-3 1L6 35q-1-1-2-5z" fill="#f5a800" opacity=".6" />
      <path d="M5 16l11 2v5L5 21z" fill="#fff" />
    </g>
  )
}

function Floppy({ gray }: { gray?: boolean }) {
  return (
    <g filter={gray ? 'grayscale(1)' : undefined} opacity={gray ? 0.5 : 1}>
      <path d="M3 1l25 2 6 5v32l-5 3L1 38V3z" fill="#0c5f92" />
      <path d="M2 2l25 2 5 5v33L2 37z" fill="#16a0d2" stroke="#0a6fa0" />
      <path d="M8 3l16 1v13L8 15z" fill="#d3dde2" />
      <path d="M18 5l4 .3v10l-4-.6z" fill="#13709c" />
      <path d="M6 19l22 2v18L6 35z" fill="#fff" />
      <path d="M8 23l17 2M8 27l17 2M8 31l17 2.500" stroke="#555" strokeWidth="1.200" />
    </g>
  )
}

const TEETH = [0, 36, 72, 108, 144, 180, 216, 252, 288, 324]

function ConfigIcon() {
  return (
    <svg width="48" height="46" viewBox="0 0 48 46">
      <g transform="translate(0 4) scale(1 .85)" stroke="#9a7a1c">
        {TEETH.map((a) => (
          <path key={a} d="M19.500 17l1.500-9h6l1.500 9z" fill="#c9a52f" transform={`translate(0 3) rotate(${a} 24 27)`} />
        ))}
        <circle cx="24" cy="30" r="14" fill="#c9a52f" />
        {TEETH.map((a) => (
          <path key={a} d="M19.500 17l1.500-9h6l1.500 9z" fill="#ecd268" stroke="none" transform={`rotate(${a} 24 27)`} />
        ))}
        <circle cx="24" cy="27" r="13.500" fill="#ecd268" stroke="none" />
        <circle cx="25" cy="27" r="6.500" fill="#a98422" />
        <circle cx="25" cy="29" r="4.500" fill="#d8c27c" stroke="none" />
      </g>
      <path
        d="M2 29l4-5 5 1 17-12q-1-7 7-11l1 1-3 6 4 4 7-3q2 6-4 9-4 2-8 0L14 30q1 5-4 8l-5 1 3-5-2-4z"
        fill="#b9c2ca"
        stroke="#5f6a74"
      />
      <path d="M10 27L31 13" stroke="#eef3f7" strokeWidth="1.500" />
    </svg>
  )
}

function DashIcon({ disabled, kind }: { disabled?: boolean; kind: 'folder' | 'disk' }) {
  return (
    <svg width="44" height="44" viewBox="0 0 44 44">
      <MiniChart gray={disabled} />
      {kind === 'folder' ? (
        <g transform="translate(14 13) scale(.7)"><Folder /></g>
      ) : (
        <g transform="translate(18 14) scale(.62)"><Floppy gray={disabled} /></g>
      )}
    </svg>
  )
}

function CloseIcon() {
  return (
    <svg width="44" height="44" viewBox="0 0 44 44">
      <circle cx="22" cy="22" r="20.500" fill="#f2f2f2" stroke="#8e8e8e" strokeWidth="1.500" />
      <circle cx="22" cy="22" r="17.500" fill="#c8141c" stroke="#8a0c12" />
      <path d="M5.500 20a16.700 16.700 0 0 1 33 0q-16 5-33 0z" fill="#f08a8a" opacity=".5" />
      <path d="M15 11.500l7 7 7-7 3.500 3.500-7 7 7 7-3.500 3.500-7-7-7 7-3.500-3.500 7-7-7-7z" fill="#fff" />
    </svg>
  )
}

/* ---------- Chrome ---------- */

const NAV = [
  { label: 'F2: PIDs', icon: <PidsIcon /> },
  { label: 'F3: Data', icon: <DataIcon /> },
  { label: 'F4: Charts', icon: <ChartsIcon /> },
  { label: 'F5: Gauges', icon: <GaugeIcon /> },
  { label: 'F6: Maps', icon: <MapsIcon /> },
  { label: 'F7: DVT', icon: <DvtIcon /> },
]

function TitleBar() {
  return (
    <header className="flex h-[31px] items-center bg-white pl-2">
      <ScanIcon size={17} />
      <h1 className="ml-1 flex-1 font-['Roboto',sans-serif] text-xs">EFILive Scan Tool [C:\EFILive\CME_0001.pld]</h1>
      <button aria-label="Minimize" className="flex h-full w-[46px] items-center justify-center">
        <svg width="11" height="11" stroke="#000" shapeRendering="crispEdges"><path d="M0 5.500h10" /></svg>
      </button>
      <button aria-label="Maximize" className="flex h-full w-[46px] items-center justify-center">
        <svg width="11" height="11" stroke="#000" fill="none" shapeRendering="crispEdges"><path d="M.5.5h9v9h-9z" /></svg>
      </button>
      <button aria-label="Close window" className="flex h-full w-[46px] items-center justify-center">
        <svg width="11" height="11" stroke="#000"><path d="M.5.5l10 10M10.500.5l-10 10" /></svg>
      </button>
    </header>
  )
}

function Tool({ label, active, children }: { label: string; active?: boolean; children: ReactNode }) {
  return (
    <button
      aria-label={label}
      className={
        active
          ? 'flex h-[39px] w-[41px] items-center justify-center border border-[#60b0f4] bg-[#99ccf5]'
          : 'flex h-[39px] w-[41px] items-center justify-center'
      }
    >
      {children}
    </button>
  )
}

function Divider() {
  return (
    <div className="flex h-[38px] w-3 justify-center">
      <div className="border-l border-[#a8a8a8]" />
    </div>
  )
}

function Toolbar() {
  return (
    <div className="flex h-[43px] items-start pt-px pl-0.5">
      <Tool label="Exit"><DoorIcon /></Tool>
      <Divider />
      <Tool label="Record">
        <RoundIcon color="#d8152c" shade="#8d0a18">
          <circle cx="15" cy="15" r="4.500" fill="#fff" />
          <circle cx="15" cy="15" r="2" fill="#f3c4c9" />
        </RoundIcon>
      </Tool>
      <Tool label="Record options">
        <RoundIcon color="#ddd400" shade="#8f8900">
          <circle cx="15" cy="15" r="4.500" fill="#fff" />
          <circle cx="15" cy="15" r="2" fill="#eeeaa8" />
        </RoundIcon>
      </Tool>
      <Divider />
      <Tool label="Pause">
        <RoundIcon color="#6f93e6" shade="#4563a8" faded><path d="M10.500 10h3v10h-3zM16.500 10h3v10h-3z" fill="#fff" /></RoundIcon>
      </Tool>
      <Tool label="Play">
        <RoundIcon color="#4a7ae0" shade="#2b4c99"><path d="M12 9.500v11l8-5.500z" fill="#fff" /></RoundIcon>
      </Tool>
      <Tool label="Stop">
        <RoundIcon color="#6f93e6" shade="#4563a8" faded><path d="M10.500 10.500h9v9h-9z" fill="#fff" /></RoundIcon>
      </Tool>
      <Tool label="Loop"><RefreshIcon /></Tool>
      <Tool label="Timed play"><TimedPlayIcon /></Tool>
      <div className="w-[11px]" />
      <Tool label="Crop"><CropIcon /></Tool>
      <Tool label="Remove">
        <RoundIcon color="#e0284a" shade="#a01530" faded><path d="M8 12h14v6H8z" fill="#fff" /></RoundIcon>
      </Tool>
      <Divider />
      <Tool label="Notes" active><PersonIcon /></Tool>
      <Tool label="Filter"><FunnelIcon /></Tool>
      <Tool label="Find previous"><BinocularsIcon dir="back" /></Tool>
      <Tool label="Find next"><BinocularsIcon dir="next" /></Tool>
      <input
        type="range"
        aria-label="Position"
        defaultValue={0}
        className="mt-3 mr-4 ml-5 h-5 min-w-0 flex-1 appearance-none bg-linear-to-b from-transparent from-[10px] via-[#6f9bd0] via-[10px] to-transparent to-[11px] [&::-webkit-slider-thumb]:h-4 [&::-webkit-slider-thumb]:w-2.5 [&::-webkit-slider-thumb]:appearance-none [&::-webkit-slider-thumb]:border [&::-webkit-slider-thumb]:border-[#2a62a8] [&::-webkit-slider-thumb]:bg-linear-to-r [&::-webkit-slider-thumb]:from-[#dcebfc] [&::-webkit-slider-thumb]:from-[3px] [&::-webkit-slider-thumb]:via-[#5f86b8] [&::-webkit-slider-thumb]:via-[4px] [&::-webkit-slider-thumb]:to-[#dcebfc] [&::-webkit-slider-thumb]:to-[5px]"
      />
    </div>
  )
}

function Mosaic() {
  const cells = ['#e4e4e8', '#b9bac2', '#cdc6be', '#adb3bd', '#dfdad2', '#d4d6dc', '#ccd3dc', '#d8d4d8', '#b6bac2', '#9c9ca4', '#c2bfb8', '#a9b0ba', '#b3acab', '#c3c3c8', '#aab2bf', '#b6b6b6']
  return (
    <svg width="40" height="12" className="inline-block" aria-hidden="true">
      {cells.map((c, i) => (
        <rect key={i} x={(i % 8) * 5} y={i < 8 ? 0 : 6} width="5" height="6" fill={c} />
      ))}
    </svg>
  )
}

function StatusBar() {
  return (
    <div className="mt-0.5 ml-40 flex h-[22px] items-start border-t border-[#dadada] pt-px text-[11px] whitespace-nowrap *:h-4 *:border-r *:border-[#d4d4d4] *:leading-4">
      <span className="w-[50px] pl-0.5">Engine</span>
      <span className="w-20 pl-1">CME</span>
      <span className="flex w-[130px] items-center pl-1">3C6UR5FLXEG<Mosaic /></span>
      <span className="w-20 pl-1">52140305</span>
      <span className="w-[140px] pr-4 text-right">Transmission</span>
      <span className="w-20" />
      <span className="w-[130px]" />
      <span className="w-20 pl-1">00000000</span>
    </div>
  )
}

function Arrow({ faded }: { faded?: boolean }) {
  return (
    <svg width="9" height="5" fill={faded ? '#a0a0a0' : '#000'}><path d="M0 0h9L4.500 5z" /></svg>
  )
}

function SplitButton({ icon, label, width, focused, disabled }: { icon: ReactNode; label: string; width: string; focused?: boolean; disabled?: boolean }) {
  let look = 'border border-[#adadad] bg-[#e1e1e1]'
  if (focused) look = 'border-2 border-[#0078d7] bg-[#e1e1e1]'
  if (disabled) look = 'border border-[#bfbfbf] bg-[#cccccc] text-[#8a8a8a]'
  return (
    <div className={`flex h-[52px] ${width} ${look}`}>
      <button disabled={disabled} aria-label={label || 'Mode'} className="flex min-w-0 flex-1 items-center justify-center">
        {icon}
        {label && <span className="flex-1 text-center leading-4">{label}</span>}
      </button>
      <div className={disabled ? 'my-0.5 border-l border-[#f0f0f0]' : 'my-0.5 border-l border-[#6d6d6d]'} />
      <button
        disabled={disabled}
        aria-label={`${label || 'Mode'} menu`}
        className={focused ? 'flex w-3 items-center justify-center bg-[#cce4f7]' : 'flex w-3.5 items-center justify-center'}
      >
        <Arrow faded={disabled} />
      </button>
    </div>
  )
}

function Combo({ id, label, value }: { id: string; label: ReactNode; value: string }) {
  return (
    <div className="min-w-0 flex-1">
      <label htmlFor={id} className="mt-0.5 mb-1 block leading-5">{label}</label>
      <div className="relative">
        <select id={id} defaultValue={value} className="block h-6 w-full appearance-none border border-[#adadad] bg-[#e1e1e1] pl-[3px]">
          <option>{value}</option>
        </select>
        <svg width="9" height="6" className="pointer-events-none absolute top-2.5 right-1" fill="none" stroke="#444"><path d="M.5.5l4 4 4-4" /></svg>
      </div>
    </div>
  )
}

function Footer() {
  return (
    <footer className="flex gap-1.5 pr-[3px] pb-[5px] pl-[3px] text-xs">
      <SplitButton width="w-[73px]" label="" icon={<TuneIcon />} />
      <SplitButton width="w-[73px]" label="" icon={<ScanIcon size={33} />} />
      <SplitButton
        width="w-[118px]"
        label="Open"
        icon={<svg width="44" height="46" viewBox="-1 0 44 46" className="ml-1.5"><Folder /></svg>}
      />
      <SplitButton
        width="w-[118px]"
        label="Save"
        focused
        icon={<svg width="36" height="44" viewBox="0 0 36 44" className="ml-2.5"><Floppy /></svg>}
      />
      <SplitButton width="w-[118px]" label="Config" icon={<span className="ml-1"><ConfigIcon /></span>} />
      <button className="flex h-[52px] w-[106px] items-center border border-[#adadad] bg-[#e1e1e1] pl-2">
        <DashIcon kind="folder" />
        <span className="flex-1 px-1.5 leading-4">Open Dash</span>
      </button>
      <SplitButton width="w-[114px]" label="Save Dash" disabled icon={<span className="ml-2"><DashIcon kind="disk" disabled /></span>} />
      <div className="ml-1 flex min-w-0 flex-1 gap-4">
        <Combo id="dashboard" label={<><u>D</u>ashboard:</>} value="CME EDA" />
        <Combo id="pid-filter" label={<>Search/<u>F</u>ilter PID:</>} value="" />
      </div>
      <button className="ml-px flex h-[52px] w-[121px] items-center border border-[#adadad] bg-[#e1e1e1] pl-[11px]">
        <CloseIcon />
        <span className="flex-1 pr-2 text-center">Close</span>
      </button>
    </footer>
  )
}

export default function App() {
  return (
    <div className="relative flex min-h-screen flex-col overflow-hidden bg-[#dfe1e6] font-['Noto_Sans',sans-serif] text-xs text-black">
      <div className="border border-[#2b2833] bg-[#f0f0f0]">
        <TitleBar />
        <div className="flex">
          <nav className="flex w-40 flex-col gap-1 pt-1 pl-1">
            {NAV.map((item) => (
              <button
                key={item.label}
                className={
                  item.label === 'F4: Charts'
                    ? 'flex h-11 items-center rounded-l border border-r-0 border-[#0078d7] bg-[#cce4f7] pl-[5px]'
                    : 'flex h-11 items-center pl-1.5'
                }
              >
                <span className="flex w-[34px] shrink-0">{item.icon}</span>
                {item.label}
              </button>
            ))}
          </nav>
          <main className="mt-px mr-px min-w-0 flex-1 border border-[#a0a0a0]">
            <div className="border border-white font-['Liberation_Sans',Arial,sans-serif]">
              {PANELS.map((channels) => (
                <Panel key={channels[0].name} channels={channels} />
              ))}
              <TimeAxis />
            </div>
            <div className="flex h-[23px] items-center justify-between px-1.5">
              <svg width="6" height="9" fill="none" stroke="#b5b5b5" strokeWidth="1.500"><path d="M5 1L1.500 4.500 5 8" /></svg>
              <svg width="6" height="9" fill="none" stroke="#b5b5b5" strokeWidth="1.500"><path d="M1 1l3.500 3.500L1 8" /></svg>
            </div>
            <Toolbar />
          </main>
        </div>
        <StatusBar />
        <Footer />
      </div>
      {/* Hint sliding in under the Save button */}
      <div className="absolute bottom-0 left-[286px] h-1.5 w-[296px] border border-b-0 border-[#a0a0a0] bg-[#f4f4f4]" />
    </div>
  )
}
